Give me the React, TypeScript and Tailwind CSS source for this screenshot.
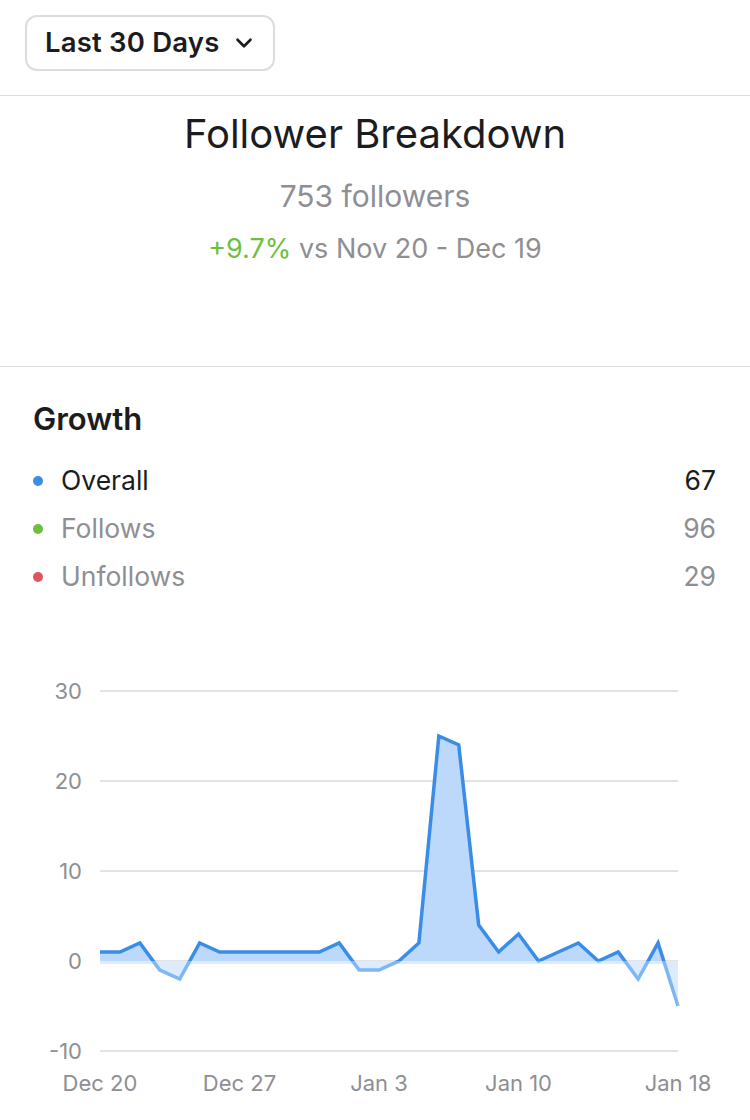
import { ChevronDown } from 'lucide-react';

const DATA = [1, 1, 2, -1, -2, 2, 1, 1, 1, 1, 1, 1, 2, -1, -1, 0, 2, 25, 24, 4, 1, 3, 0, 1, 2, 0, 1, -2, 2, -5];

const X0 = 100;
const X1 = 678;
const Y_TOP = 20; // value 30
const UNIT = 9;
const zeroY = Y_TOP + 30 * UNIT;

const px = (i: number) => X0 + (i * (X1 - X0)) / (DATA.length - 1);
const py = (v: number) => zeroY - v * UNIT;

const LEGEND = [
  { label: 'Overall', value: 67, dot: 'bg-[#3b8ee8]', text: 'text-[#1c1c1e]' },
  { label: 'Follows', value: 96, dot: 'bg-[#6cbf3f]', text: 'text-[#8e8e93]' },
  { label: 'Unfollows', value: 29, dot: 'bg-[#e0555a]', text: 'text-[#8e8e93]' },
];

function GrowthChart() {
  const pts = DATA.map((v, i) => `${px(i)},${py(v)}`).join(' ');
  const area = `${X0},${zeroY} ${pts} ${X1},${zeroY}`;
  const ticks = [30, 20, 10, 0, -10];
  const xLabels = [
    { i: 0, t: 'Dec 20' },
    { i: 7, t: 'Dec 27' },
    { i: 14, t: 'Jan 3' },
    { i: 21, t: 'Jan 10' },
    { i: 29, t: 'Jan 18' },
  ];
  return (
    <svg width={750} height={450} className="block" style={{ fontFamily: 'Inter, "Liberation Sans", sans-serif' }}>
      <defs>
        <clipPath id="above">
          <rect x={0} y={0} width={750} height={zeroY} />
        </clipPath>
        <clipPath id="below">
          <rect x={0} y={zeroY} width={750} height={400} />
        </clipPath>
      </defs>
      {ticks.map(t => (
        <g key={t}>
          <line x1={X0} x2={X1} y1={py(t)} y2={py(t)} stroke="#dadada" strokeWidth={1.5} />
          <text x={82} y={py(t) + 8} textAnchor="end" fontSize={22} fill="#8e8e93">{t}</text>
        </g>
      ))}
      <polygon points={area} fill="#bcd9fb" clipPath="url(#above)" />
      <polygon points={area} fill="#dcebfd" clipPath="url(#below)" />
      <rect x={X0} y={zeroY} width={X1 - X0} height={3} fill="#dcebfd" />
      <polyline points={pts} fill="none" stroke="#3a8de6" strokeWidth={3.5} strokeLinejoin="miter" clipPath="url(#above)" />
      <polyline points={pts} fill="none" stroke="#7db8f4" strokeWidth={3.5} strokeLinejoin="miter" clipPath="url(#below)" />
      {xLabels.map(l => (
        <text key={l.t} x={px(l.i)} y={420} textAnchor="middle" fontSize={22} fill="#8e8e93">{l.t}</text>
      ))}
    </svg>
  );
}

export default function App() {
  return (
    <div className="w-[750px] h-[1120px] bg-white overflow-hidden font-['Inter','Liberation_Sans',sans-serif] text-[#1c1c1e]">
      <div className="h-[96px] pt-[15px] pl-[25px] border-b-[1.5px] border-[#dedede]">
        <button className="h-[56px] w-[250px] flex items-center gap-[11px] pl-[18px] border-2 border-[#dcdcdc] rounded-[12px] text-[27.5px] font-semibold tracking-[0.2px]">
          Last 30 Days
          <ChevronDown size={26} strokeWidth={2.4} />
        </button>
      </div>

      <div className="h-[271px] border-b-[1.5px] border-[#dedede] flex flex-col items-center pt-[14px]">
        <h1 className="text-[40px] leading-[48px]">Follower Breakdown</h1>
        <div className="text-[30px] leading-[38px] text-[#8e8e93] mt-[19px]">753 followers</div>
        <div className="text-[27px] leading-[34px] text-[#8e8e93] mt-[17px]">
          <span className="text-[#6cbf3f]">+9.7%</span> vs Nov 20 - Dec 19
        </div>
      </div>

      <div className="px-[33px] pt-[35px]">
        <h2 className="text-[31px] leading-[34px] font-semibold">Growth</h2>
        <div className="mt-[21px] flex flex-col">
          {LEGEND.map(l => (
            <div key={l.label} className="h-[48px] flex items-center justify-between text-[26.5px]">
              <div className="flex items-center gap-[18px]">
                <span className={`w-[10px] h-[10px] rounded-full ${l.dot}`} />
                <span className={l.text}>{l.label}</span>
              </div>
              <span className={`${l.text} pr-[1px]`}>{l.value}</span>
            </div>
          ))}
        </div>
      </div>

      <div className="mt-[70px]">
        <GrowthChart />
      </div>
    </div>
  );
}
